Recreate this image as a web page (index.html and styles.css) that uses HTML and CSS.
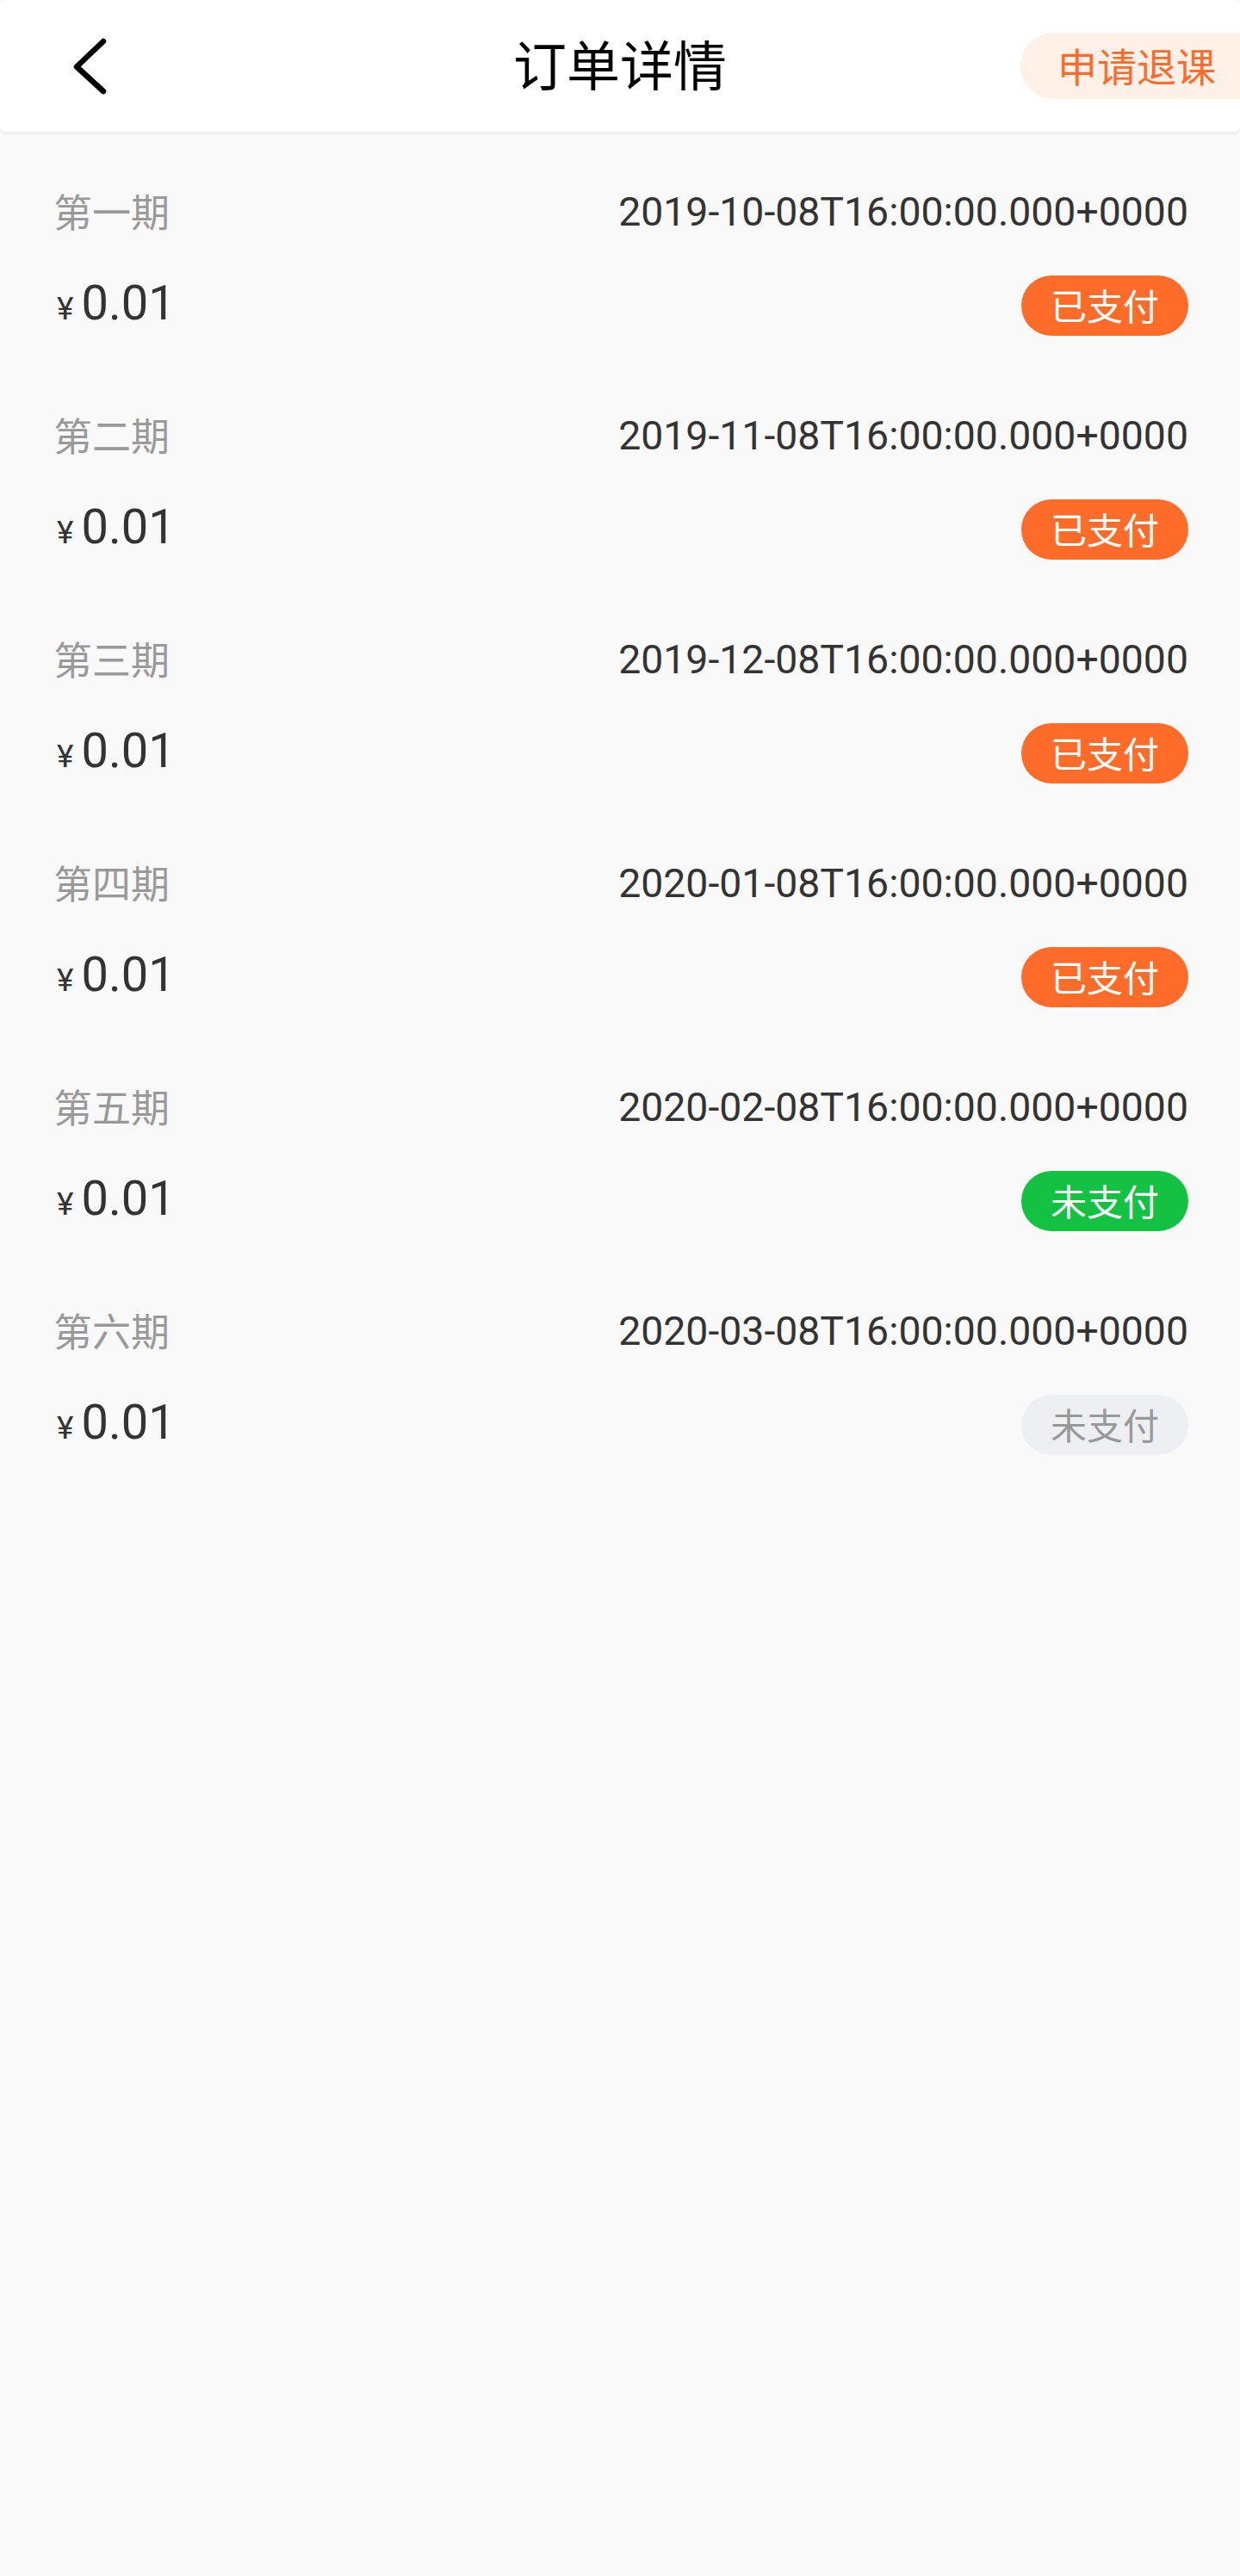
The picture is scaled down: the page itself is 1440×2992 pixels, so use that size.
FILE: index.html
```html
<!DOCTYPE html>
<html lang="zh-CN">
<head>
<meta charset="utf-8">
<title>订单详情</title>
<link rel="stylesheet" href="styles.css">
</head>
<body>
<header class="topbar">
  <div class="topbar-left">
    <svg class="back" width="48" height="70" viewBox="0 0 48 70" aria-hidden="true">
      <polyline points="39,6 8,35.5 39,64" fill="none" stroke="#000" stroke-width="6.5" stroke-linecap="round" stroke-linejoin="round"/>
    </svg>
  </div>
  <h1 class="title">订单详情</h1>
  <div class="topbar-right">
    <span class="refund">申请退课</span>
  </div>
</header>
<main class="list">
  <section class="row">
    <div class="line1"><span class="period">第一期</span><span class="date">2019-10-08T16:00:00.000+0000</span></div>
    <div class="line2"><span class="price"><span class="yen">¥</span>0.01</span><span class="badge paid">已支付</span></div>
  </section>
  <section class="row">
    <div class="line1"><span class="period">第二期</span><span class="date">2019-11-08T16:00:00.000+0000</span></div>
    <div class="line2"><span class="price"><span class="yen">¥</span>0.01</span><span class="badge paid">已支付</span></div>
  </section>
  <section class="row">
    <div class="line1"><span class="period">第三期</span><span class="date">2019-12-08T16:00:00.000+0000</span></div>
    <div class="line2"><span class="price"><span class="yen">¥</span>0.01</span><span class="badge paid">已支付</span></div>
  </section>
  <section class="row">
    <div class="line1"><span class="period">第四期</span><span class="date">2020-01-08T16:00:00.000+0000</span></div>
    <div class="line2"><span class="price"><span class="yen">¥</span>0.01</span><span class="badge paid">已支付</span></div>
  </section>
  <section class="row">
    <div class="line1"><span class="period">第五期</span><span class="date">2020-02-08T16:00:00.000+0000</span></div>
    <div class="line2"><span class="price"><span class="yen">¥</span>0.01</span><span class="badge due">未支付</span></div>
  </section>
  <section class="row">
    <div class="line1"><span class="period">第六期</span><span class="date">2020-03-08T16:00:00.000+0000</span></div>
    <div class="line2"><span class="price"><span class="yen">¥</span>0.01</span><span class="badge pending">未支付</span></div>
  </section>
</main>
</body>
</html>
```

FILE: styles.css
```css
* {
  box-sizing: border-box;
}

html, body {
  margin: 0;
  padding: 0;
}

body {
  min-height: 2992px;
  background: #f9f9f9;
  font-family: Roboto, "Noto Sans CJK SC", sans-serif;
  color: #333;
}

.topbar {
  display: grid;
  grid-template-columns: 1fr auto 1fr;
  align-items: center;
  height: 153px;
  background: #fff;
  border-radius: 6px;
  box-shadow: 0 2px 4px rgba(0, 0, 0, 0.07);
}

.topbar-left {
  display: flex;
  align-items: center;
  padding-left: 81px;
}

.back {
  display: block;
}

.title {
  margin: 0;
  padding-bottom: 8px;
  font-family: "Noto Sans CJK SC", sans-serif;
  font-weight: 400;
  font-size: 62px;
  line-height: 80px;
  color: #000;
}

.topbar-right {
  display: flex;
  justify-content: flex-end;
  align-items: center;
}

.refund {
  display: block;
  height: 77px;
  padding: 0 28px 3px 43px;
  border-radius: 39px 0 0 39px;
  background: #fff0e8;
  color: #ff6b2b;
  font-family: "Noto Sans CJK SC", sans-serif;
  font-size: 46px;
  line-height: 74px;
}

.list {
  padding-top: 20px;
}

.row {
  display: flex;
  flex-direction: column;
  gap: 44px;
  padding: 43px 60px 43px 62px;
}

.line1 {
  display: flex;
  justify-content: space-between;
  align-items: center;
  height: 60px;
}

.period {
  font-family: "Noto Sans CJK SC", sans-serif;
  font-size: 45px;
  line-height: 58px;
  padding-bottom: 2px;
  color: #999;
}

.date {
  font-family: Roboto, sans-serif;
  font-size: 46.4px;
  line-height: 60px;
  color: #333;
}

.line2 {
  display: flex;
  justify-content: space-between;
  align-items: center;
  height: 70px;
}

.price {
  font-family: Roboto, sans-serif;
  font-size: 56px;
  line-height: 70px;
  color: #333;
}

.yen {
  font-size: 37px;
  margin-right: 9px;
  margin-left: 4px;
}

.badge {
  display: block;
  width: 194px;
  height: 70px;
  padding-bottom: 2px;
  border-radius: 35px;
  text-align: center;
  font-family: "Noto Sans CJK SC", sans-serif;
  font-size: 42px;
  line-height: 68px;
}

.badge.paid {
  background: #ff6c2a;
  color: #fff;
}

.badge.due {
  background: #13c143;
  color: #fff;
}

.badge.pending {
  background: #eeeff3;
  color: #999;
}
```
